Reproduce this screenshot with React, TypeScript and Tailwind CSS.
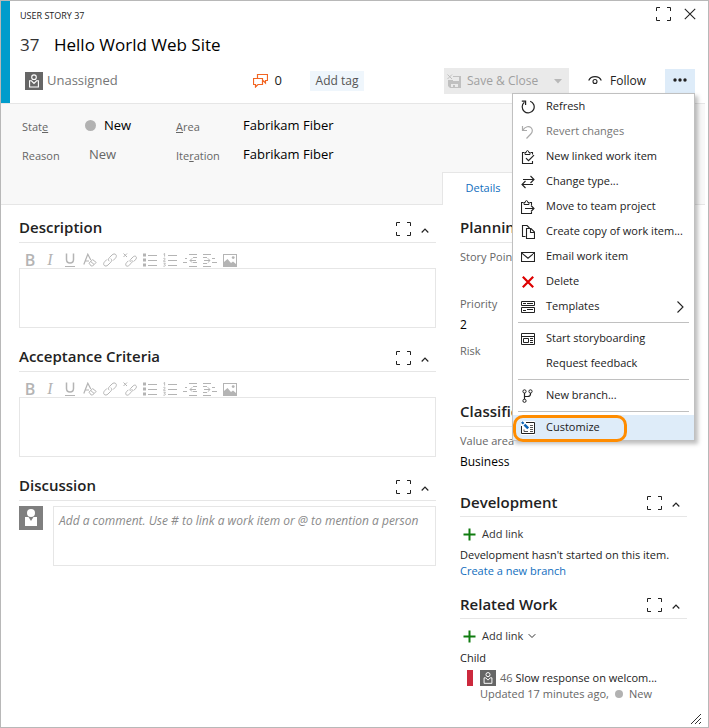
import React from "react";

type IconProps = { children: React.ReactNode; size?: number; className?: string };

function Icon({ children, size = 14, className = "" }: IconProps) {
  return (
    <svg
      width={size}
      height={size}
      viewBox={`0 0 ${size} ${size}`}
      fill="none"
      stroke="currentColor"
      aria-hidden="true"
      className={`shrink-0 ${className}`}
    >
      {children}
    </svg>
  );
}

function ExpandIcon() {
  return (
    <Icon size={15}>
      <path d="M0.5 4V0.5H4M11 0.5H14.5V4M14.5 10V13.5H11M4 13.5H0.5V10" />
    </Icon>
  );
}

function ChevronUp() {
  return (
    <Icon size={8}>
      <path d="M0.7 6.5L4 3.2L7.3 6.5" strokeWidth="1.2" />
    </Icon>
  );
}

function PersonIcon({ size }: { size: number }) {
  return (
    <svg width={size} height={size} viewBox="0 0 18 18" aria-hidden="true" className="shrink-0">
      <rect width="18" height="18" fill="#666666" />
      <circle cx="9" cy="5.2" r="2.3" fill="none" stroke="#fff" strokeWidth="1.1" />
      <path d="M4.6 8.8V15H13.4V8.8H11.6L9 11.4L6.4 8.8Z" fill="none" stroke="#fff" strokeWidth="1.1" />
    </svg>
  );
}

const toolbar: { name: string; icon: React.ReactNode }[] = [
  { name: "Bold", icon: <span className="text-base font-semibold leading-4">B</span> },
  {
    name: "Italic",
    icon: <span className="font-['Liberation_Serif',serif] text-base italic leading-4">I</span>,
  },
  {
    name: "Underline",
    icon: (
      <Icon>
        <path d="M3.5 0.5V6.5Q3.5 10 7 10T10.5 6.5V0.5" strokeWidth="1.5" />
        <path d="M2 13.5H12" />
      </Icon>
    ),
  },
  {
    name: "Clear formatting",
    icon: (
      <Icon>
        <path d="M0.8 11.5L4.8 1.2L7.8 7M2.2 8H6" strokeWidth="1.2" />
        <path d="M6 10.2L9.6 6.6L13.2 9.4L9.6 13H8.2ZM7.8 8.6L11 11.4" />
      </Icon>
    ),
  },
  {
    name: "Insert link",
    icon: (
      <Icon>
        <path d="M6.2 8.2C5 7 5.4 5.6 6.4 4.6L9 2C10.2 0.8 11.8 0.6 12.8 1.6S13.4 4.2 12.2 5.4L10 7.6M7.8 5.6C9 6.8 8.8 8.2 7.8 9.2L5 12C3.8 13.2 2.2 13.4 1.2 12.4S0.6 9.8 1.8 8.6L4 6.4" />
      </Icon>
    ),
  },
  {
    name: "Remove link",
    icon: (
      <Icon>
        <path d="M7.6 9C6.6 8 7 7 7.8 6.2L10 4C11 3 12.2 2.8 13 3.6S13.4 5.8 12.4 6.8L10.6 8.6M8.6 7C9.6 8 9.4 9 8.6 9.8L6.2 12.2C5.2 13.2 4 13.6 3.2 12.8S2.6 10.6 3.6 9.6L5.4 7.8" />
        <path d="M0.5 0.5L4 4M4 0.5L0.5 4" />
      </Icon>
    ),
  },
  {
    name: "Bulleted list",
    icon: (
      <Icon>
        <path d="M0 2H3M0 7H3M0 12H3" strokeWidth="3" />
        <path d="M5 2.5H14M5 7.5H14M5 12.5H14" />
      </Icon>
    ),
  },
  {
    name: "Numbered list",
    icon: (
      <Icon>
        <path d="M5 2.5H14M5 7.5H14M5 12.5H14" />
        <path
          d="M0.5 1.2L1.6 0.4V3.6M0.4 5.8Q0.6 5.2 1.4 5.2T2.2 6L0.4 8.3H2.6M0.5 10.2H2.4L1.4 11.4Q2.4 11.4 2.4 12.4T0.4 13.2"
          strokeWidth="0.9"
        />
      </Icon>
    ),
  },
  {
    name: "Decrease indent",
    icon: (
      <Icon>
        <path d="M6 1.5H14M10 4.5H14M10 9.5H14M6 13.5H14M0 9.5H4M2 5.5H4" />
        <path d="M13 7.5H7M9.2 5.3L7 7.5L9.2 9.7" />
      </Icon>
    ),
  },
  {
    name: "Increase indent",
    icon: (
      <Icon>
        <path d="M0 1.5H8M0 4.5H4M0 10.5H4M0 13.5H8M9 5.5H12M9 9.5H14" />
        <path d="M1 7.5H7M4.8 5.3L7 7.5L4.8 9.7" />
      </Icon>
    ),
  },
  {
    name: "Insert image",
    icon: (
      <Icon>
        <rect x="0.5" y="1.5" width="13" height="12" />
        <path d="M1 13V9L4.5 6L8 10L10 8.5L13 11V13Z" fill="currentColor" stroke="none" />
        <circle cx="10.2" cy="4.6" r="1.4" fill="currentColor" stroke="none" />
      </Icon>
    ),
  },
];

function SectionHeader({ title, expand = true }: { title: string; expand?: boolean }) {
  return (
    <div className="flex h-[30px] items-center justify-between border-b border-[#e6e6e6] pr-[7px]">
      <h2 className="text-[15px] font-semibold text-[#222]">{title}</h2>
      {expand && (
        <div className="flex items-center gap-2.5 pt-1 text-[#222]">
          <button type="button" aria-label={`Maximize ${title}`}>
            <ExpandIcon />
          </button>
          <button type="button" aria-label={`Collapse ${title}`}>
            <ChevronUp />
          </button>
        </div>
      )}
    </div>
  );
}

function RichText({ title }: { title: string }) {
  return (
    <section className="mb-3.5">
      <SectionHeader title={title} />
      <div className="flex h-[25px] items-center pl-px pt-2 text-[#b4b4b4]">
        {toolbar.map((t) => (
          <button
            key={t.name}
            type="button"
            aria-label={t.name}
            className="flex h-4 w-5 items-center justify-center"
          >
            {t.icon}
          </button>
        ))}
      </div>
      <textarea
        aria-label={title}
        className="block h-[60px] w-full resize-none border border-[#e6e6e6] bg-white"
      />
    </section>
  );
}

function Field({ id, label, value }: { id: string; label: string; value: string }) {
  return (
    <div className="mb-[7px]">
      <label htmlFor={id} className="block h-4 text-[11px] leading-4 text-[#666]">
        {label}
      </label>
      <input id={id} defaultValue={value} className="block h-6 w-full text-xs text-black" />
    </div>
  );
}

function AddLink({ menu = false }: { menu?: boolean }) {
  return (
    <button type="button" className="flex h-6 items-center pl-[3px] text-[11px] text-[#333]">
      <Icon size={13} className="mr-[6px] text-[#107c10]">
        <path d="M6.5 0.5V12.5M0.5 6.5H12.5" strokeWidth="2" />
      </Icon>
      Add link
      {menu && (
        <Icon size={8} className="ml-[5px]">
          <path d="M0.7 2.2L4 5.5L7.3 2.2" />
        </Icon>
      )}
    </button>
  );
}

type MenuEntry =
  | { kind: "line" }
  | { kind: "item"; label: string; icon?: React.ReactNode; tone?: "muted" | "active"; submenu?: boolean };

const menu: MenuEntry[] = [
  {
    kind: "item",
    label: "Refresh",
    icon: (
      <Icon>
        <path d="M9.2 1.2A6 6 0 1 1 3.4 2.2M0.8 1.2H4.6V5" strokeWidth="1.2" />
      </Icon>
    ),
  },
  {
    kind: "item",
    label: "Revert changes",
    tone: "muted",
    icon: (
      <Icon className="text-[#aaa]">
        <path d="M1.5 1V5.5H6M1.8 5.2C4.5 1.2 8 0.8 10 2.6S11.6 7.2 9.8 9L5.5 13.5" strokeWidth="1.2" />
      </Icon>
    ),
  },
  {
    kind: "item",
    label: "New linked work item",
    icon: (
      <Icon>
        <path d="M3.5 2.5H1.5V13.5H11.5V11M9.5 2.5H11.5V4.5" strokeWidth="1.1" />
        <path d="M4 4.5V2.5H5.2Q5.2 0.6 6.5 0.6T7.8 2.5H9V4.5Z" />
        <path d="M5 8.2L7.5 10.7L13 5.2" strokeWidth="1.2" />
      </Icon>
    ),
  },
  {
    kind: "item",
    label: "Change type...",
    icon: (
      <Icon>
        <path d="M2 4.5H13M9.5 1L13 4.5L9.5 8M12 9.5H1M4.5 6L1 9.5L4.5 13" strokeWidth="1.1" />
      </Icon>
    ),
  },
  {
    kind: "item",
    label: "Move to team project",
    icon: (
      <Icon>
        <path d="M2.5 2.5H0.5V13.5H10.5V12M8.5 2.5H10.5V5" strokeWidth="1.1" />
        <path d="M3 4.5V2.5H4.2Q4.2 0.6 5.5 0.6T6.8 2.5H8V4.5Z" />
        <path d="M4 8.5H13M10 5.5L13 8.5L10 11.5" strokeWidth="1.1" />
      </Icon>
    ),
  },
  {
    kind: "item",
    label: "Create copy of work item...",
    icon: (
      <Icon>
        <path d="M4.5 11.5H1.5V0.5H6L8.5 3M5.5 3.5H10L13.5 7V13.5H5.5ZM9.5 3.5V7.5H13.5" strokeWidth="1.1" />
      </Icon>
    ),
  },
  {
    kind: "item",
    label: "Email work item",
    icon: (
      <Icon>
        <path d="M0.5 2.5H13.5V11.5H0.5ZM0.5 2.8L7 8.2L13.5 2.8" strokeWidth="1.1" />
      </Icon>
    ),
  },
  {
    kind: "item",
    label: "Delete",
    icon: (
      <Icon className="text-[#dd0000]">
        <path d="M1.8 1.8L12.2 12.2M12.2 1.8L1.8 12.2" strokeWidth="2.2" />
      </Icon>
    ),
  },
  {
    kind: "item",
    label: "Templates",
    submenu: true,
    icon: (
      <Icon>
        <path d="M0.5 1.5H13.5V5.5H0.5ZM0.5 7.5H13.5V12.5H0.5ZM2 3.5H5M6 3.5H12M2 10.5H5M6 9.5H12" />
      </Icon>
    ),
  },
  { kind: "line" },
  {
    kind: "item",
    label: "Start storyboarding",
    icon: (
      <Icon>
        <path d="M0.5 1.5H13.5V12.5H0.5ZM0.5 4.5H13.5M2.5 6.5H7.5V10.5H2.5ZM9 6.5H12M9 8.5H12M9 10.5H12" />
      </Icon>
    ),
  },
  { kind: "item", label: "Request feedback" },
  { kind: "line" },
  {
    kind: "item",
    label: "New branch...",
    icon: (
      <Icon>
        <circle cx="3.5" cy="2.4" r="1.6" />
        <circle cx="9.5" cy="2.4" r="1.6" />
        <circle cx="3.5" cy="11.8" r="1.6" />
        <path d="M3.5 4V10.2M9.5 4V5Q9.5 7.5 6.5 7.5H3.5" strokeWidth="1.2" />
      </Icon>
    ),
  },
  { kind: "line" },
  {
    kind: "item",
    label: "Customize",
    tone: "active",
    icon: (
      <Icon>
        <path d="M0 0H14V14H0Z" fill="#fff" stroke="none" />
        <path d="M5 1.5H13.5V12.5H0.5V5" />
        <path d="M3 8.5V10.5H7M9 4.5H12M9 6.5H12M9 8.5H12M9 10.5H12" stroke="#555" />
        <path d="M0.8 1L2.6 2.8" stroke="#0b63b5" strokeWidth="2.2" />
        <path d="M3.4 3.6L7.2 7.4" stroke="#0b63b5" strokeWidth="2.6" />
      </Icon>
    ),
  },
];

function ActionsMenu() {
  return (
    <div
      role="menu"
      className="absolute right-0 top-full z-10 w-[183px] border border-[#c0c0c0] bg-white shadow-[3px_3px_4px_rgba(0,0,0,0.25)]"
    >
      {menu.map((m, i) =>
        m.kind === "line" ? (
          <hr key={i} className="mx-[5px] my-[3px] border-t border-[#c0c0c0]" />
        ) : (
          <button
            key={i}
            type="button"
            role="menuitem"
            className={`relative flex h-[25px] w-full items-center whitespace-nowrap pl-2 text-left text-[11px] ${
              m.tone === "muted" ? "text-[#767676]" : "text-[#222]"
            } ${m.tone === "active" ? "bg-[#deecf9]" : ""}`}
          >
            <span className="mr-[11px] w-3.5 shrink-0">{m.icon}</span>
            {m.label}
            {m.submenu && (
              <Icon className="ml-auto mr-[7px]">
                <path d="M4.5 1.5L10 7L4.5 12.5" strokeWidth="1.1" />
              </Icon>
            )}
            {m.tone === "active" && (
              <span className="absolute left-0 top-0 h-[27px] w-[114px] rounded-[10px] border-[3px] border-[#ff8c00]" />
            )}
          </button>
        ),
      )}
    </div>
  );
}

function Header() {
  return (
    <header className="border-l-[9px] border-[#009ccc] pl-2.5">
      <div className="flex h-[30px] items-center justify-between pr-3 text-[#222]">
        <span className="text-[9px]">USER STORY 37</span>
        <div className="flex items-center gap-[13px] pb-1">
          <button type="button" aria-label="Full screen">
            <ExpandIcon />
          </button>
          <button type="button" aria-label="Close">
            <Icon size={12}>
              <path d="M0.8 0.8L11.2 11.2M11.2 0.8L0.8 11.2" strokeWidth="1.1" />
            </Icon>
          </button>
        </div>
      </div>
      <div className="flex h-7 items-center text-[17px]">
        <span className="w-[34px] shrink-0 text-[#333]">37</span>
        <input aria-label="Title" defaultValue="Hello World Web Site" className="min-w-0 flex-1 text-black" />
      </div>
      <div className="flex h-11 items-center pr-[13px] text-xs">
        <button type="button" className="flex items-center gap-1 pl-[5px] text-[#767676]">
          <PersonIcon size={18} />
          <span className="text-[13px]">Unassigned</span>
        </button>
        <div className="flex flex-1 items-center justify-end gap-7">
          <button type="button" aria-label="Comments" className="flex items-center gap-[7px] text-[13px] text-[#222]">
            <Icon size={15} className="text-[#f26522]">
              <path d="M4.5 5V1.5H14.5V7.5H12.5V10L10 7.5M0.5 5.5H9.5V11.5H5L2.5 14V11.5H0.5Z" strokeWidth="1.2" />
            </Icon>
            0
          </button>
          <button type="button" className="h-5 w-[54px] bg-[#eff6fc] text-xs text-[#555]">
            Add tag
          </button>
        </div>
        <div className="ml-20 flex items-center">
          <div className="flex h-[26px] items-center bg-[#eaeaea] text-[#a0a0a0]">
            <button type="button" disabled className="flex items-center gap-[5px] pl-[3px]">
              <Icon size={15} className="text-[#c0c0c0]">
                <path d="M0.5 0.5L5 5M5 0.5L0.5 5" />
                <path
                  d="M6 2H14V14H3L1 12V6H6ZM6 3V7H12V3ZM4 10V13H6V11H8V13H11V10Z"
                  fill="currentColor"
                  fillRule="evenodd"
                  stroke="none"
                />
              </Icon>
              <span className="w-[71px] whitespace-nowrap text-left">Save &amp; Close</span>
            </button>
            <button type="button" disabled aria-label="More save options" className="pl-4 pr-[7px]">
              <svg width="8" height="5" viewBox="0 0 8 5" fill="#b8b8b8" aria-hidden="true">
                <path d="M0 0H8L4 4.5Z" />
              </svg>
            </button>
          </div>
          <button type="button" className="ml-[19px] flex w-[77px] items-center gap-2 text-[#222]">
            <Icon size={14}>
              <path d="M0.7 6.5C2 3.8 4.2 2.7 7 2.7S12 3.8 13.3 6.5" strokeWidth="1.2" />
              <circle cx="7" cy="7.5" r="2" strokeWidth="1.1" />
            </Icon>
            Follow
          </button>
          <div className="relative">
            <button
              type="button"
              aria-label="Actions"
              aria-haspopup="menu"
              className="flex h-6 w-[30px] items-center justify-center bg-[#deecf9] pb-[2px] text-[#222]"
            >
              <svg width="14" height="4" viewBox="0 0 14 4" fill="currentColor" aria-hidden="true">
                <circle cx="2" cy="2" r="1.7" />
                <circle cx="7" cy="2" r="1.7" />
                <circle cx="12" cy="2" r="1.7" />
              </svg>
            </button>
            <ActionsMenu />
          </div>
        </div>
      </div>
    </header>
  );
}

function StatusBar() {
  return (
    <div className="mr-[3px] border-y border-[#e6e6e6] bg-[#f8f8f8]">
      <div className="grid h-[68px] grid-cols-[154px_1fr] content-start pl-[21px] pt-[7px] text-[13px]">
        <div className="flex h-[29px] items-center">
          <label htmlFor="state" className="w-[63px] pt-1 text-[11px] text-[#666]">
            Stat<u>e</u>
          </label>
          <span className="mr-2 size-[11px] rounded-full bg-[#b2b2b2]" />
          <input id="state" defaultValue="New" className="w-[50px] text-black" />
        </div>
        <div className="flex h-[29px] items-center">
          <label htmlFor="area" className="w-[67px] pt-1 text-[11px] text-[#666]">
            <u>A</u>rea
          </label>
          <input id="area" defaultValue="Fabrikam Fiber" className="text-black" />
        </div>
        <div className="flex h-[29px] items-center">
          <label htmlFor="reason" className="w-[67px] pt-1 text-[11px] text-[#666]">
            Reason
          </label>
          <input id="reason" defaultValue="New" className="w-[50px] text-[#666]" />
        </div>
        <div className="flex h-[29px] items-center">
          <label htmlFor="iteration" className="w-[67px] pt-1 text-[11px] text-[#666]">
            Ite<u>r</u>ation
          </label>
          <input id="iteration" defaultValue="Fabrikam Fiber" className="text-black" />
        </div>
      </div>
      <div className="-mb-px flex justify-end">
        <button
          type="button"
          className="mr-[179px] h-[33px] w-[84px] border-x border-t border-[#e6e6e6] bg-white pb-[2px] pr-[2px] text-[11px] text-[#106ebe]"
        >
          Details
        </button>
      </div>
    </div>
  );
}

export default function App() {
  return (
    <div className="relative flex min-h-screen flex-col border border-[#b8b8b8] bg-white font-['Open_Sans','Noto_Sans',sans-serif]">
      <Header />
      <StatusBar />
      <main className="flex gap-6 pb-[25px] pl-[18px] pr-[21px] pt-2">
        <div className="min-w-0 flex-1">
          <RichText title="Description" />
          <RichText title="Acceptance Criteria" />
          <section>
            <SectionHeader title="Discussion" />
            <div className="flex gap-2.5 pt-[5px]">
              <svg width="24" height="24" viewBox="0 0 24 24" aria-hidden="true" className="shrink-0">
                <rect width="24" height="24" fill="#7f7f7f" />
                <circle cx="12" cy="7" r="4" fill="#fff" />
                <path d="M6 11H9.5L12 15L14.5 11H18V20H6Z" fill="#fff" />
              </svg>
              <textarea
                aria-label="Comment"
                placeholder="Add a comment. Use # to link a work item or @ to mention a person"
                className="block h-[60px] min-w-0 flex-1 resize-none overflow-hidden border border-[#e6e6e6] py-[6px] pl-[5px] text-xs italic placeholder:text-[#8a8a8a]"
              />
            </div>
          </section>
        </div>
        <div className="w-[227px] shrink-0">
          <section className="pb-[7px]">
            <SectionHeader title="Planning" expand={false} />
            <div className="pt-[6px]">
              <Field id="points" label="Story Points" value="" />
              <Field id="priority" label="Priority" value="2" />
              <Field id="risk" label="Risk" value="" />
            </div>
          </section>
          <section className="pb-[7px]">
            <SectionHeader title="Classification" expand={false} />
            <div className="pt-[6px]">
              <Field id="value-area" label="Value area" value="Business" />
            </div>
          </section>
          <section className="pb-[10px] text-[11px] leading-4">
            <SectionHeader title="Development" />
            <div className="pt-[5px]">
              <AddLink />
              <p className="whitespace-nowrap pt-px text-[#222]">Development hasn't started on this item.</p>
              <a href="#branch" className="block text-[#106ebe]">
                Create a new branch
              </a>
            </div>
          </section>
          <section className="text-[11px] leading-4">
            <SectionHeader title="Related Work" />
            <div className="pt-[5px]">
              <AddLink menu />
              <p className="mt-0.5 text-[#222]">Child</p>
              <div className="mt-1 flex gap-[7px] pl-[7px]">
                <span className="h-4 w-[6px] bg-[#cc293d]" />
                <div className="min-w-0 text-[#666]">
                  <a href="#46" className="flex items-center gap-1 whitespace-nowrap">
                    <PersonIcon size={16} />
                    <span>
                      46 <span className="text-[#222]">Slow response on welcom...</span>
                    </span>
                  </a>
                  <p className="flex items-center gap-[6px] whitespace-nowrap">
                    <span>Updated 17 minutes ago,</span>
                    <span className="size-2 rounded-full bg-[#b2b2b2]" />
                    <span>New</span>
                  </p>
                </div>
              </div>
            </div>
          </section>
        </div>
      </main>
      <Icon size={12} className="absolute bottom-0.5 right-1.5 text-[#333]">
        <path d="M1 11L11 1M5 11L11 5M9 11L11 9" />
      </Icon>
    </div>
  );
}
